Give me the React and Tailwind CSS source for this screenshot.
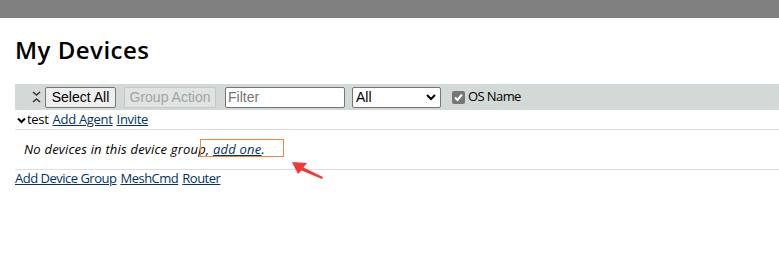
import React from "react";

const tre = { fontFamily: '"Open Sans", "DejaVu Sans", sans-serif' };

export default function App() {
  return (
    <div className="relative w-[779px] h-[269px] bg-white overflow-hidden text-black" style={tre}>
      <div className="h-[18px] bg-[#808080]" />
      <div className="pl-[15px]">
        <h1 className="h-[66px] pt-[16px] text-[24px] leading-[32px] font-semibold tracking-[0.5px]">My Devices</h1>
        <div className="h-[26px] bg-[#d3d9d6] flex items-center pl-[17px]">
          <svg width="9" height="14" viewBox="0 0 9 14" className="mr-[4px]">
            <path d="M1 2 L4.5 5 L8 2" stroke="#333" strokeWidth="1.6" fill="none" />
            <path d="M1 12 L4.5 9 L8 12" stroke="#333" strokeWidth="1.6" fill="none" />
          </svg>
          <button className="h-[21px] w-[71px] border border-[#767676] rounded-[2px] bg-[#efefef] text-[14px] leading-[19px] text-black" style={{ fontFamily: '"Liberation Sans", Arial, sans-serif' }}>Select All</button>
          <button disabled className="ml-[8px] h-[21px] w-[92px] border border-[#c4c8c6] rounded-[2px] bg-[#dfe3e1] text-[14px] leading-[19px] text-[#a0a4a2]" style={{ fontFamily: '"Liberation Sans", Arial, sans-serif' }}>Group Action</button>
          <input placeholder="Filter" className="ml-[9px] h-[21px] w-[120px] border border-[#767676] rounded-[2px] bg-white px-[2px] text-[14px] placeholder:text-[#757575] outline-none" style={{ fontFamily: '"Liberation Sans", Arial, sans-serif' }} />
          <div className="ml-[7px] h-[21px] w-[89px] border border-[#767676] rounded-[2px] bg-white flex items-center justify-between pl-[3px] pr-[4px] text-[14px]" style={{ fontFamily: '"Liberation Sans", Arial, sans-serif' }}>
            <span>All</span>
            <svg width="10" height="7" viewBox="0 0 10 7"><path d="M1 1 L5 5 L9 1" stroke="#000" strokeWidth="2" fill="none" /></svg>
          </div>
          <div className="ml-[11px] w-[13px] h-[13px] rounded-[2px] bg-[#767676] flex items-center justify-center">
            <svg width="11" height="11" viewBox="0 0 11 11"><path d="M2 5.5 L4.5 8 L9 2.5" stroke="#fff" strokeWidth="2" fill="none" /></svg>
          </div>
          <span className="ml-[3px] text-[13px] tracking-[-0.6px]">OS Name</span>
        </div>
        <div className="h-[20px] flex items-center pt-[1px] text-[13px] tracking-[-0.3px] border-b border-[#dddddd]">
          <svg width="9" height="7" viewBox="0 0 9 7" className="ml-[2px] mr-[1px]"><path d="M1 1.5 L4.5 5 L8 1.5" stroke="#000" strokeWidth="2" fill="none" /></svg>
          <span>test</span>
          <a className="ml-[4px] underline text-[#003366]">Add Agent</a>
          <a className="ml-[4px] underline text-[#003366]">Invite</a>
        </div>
        <div className="h-[40px] flex items-center pl-[9px] text-[13px] italic tracking-[0.2px] border-b border-[#dddddd]">
          <span>No devices in this device group, <a className="underline text-[#003366]">add one</a>.</span>
        </div>
        <div className="h-[18px] flex items-center text-[13px] tracking-[-0.5px]">
          <a className="underline text-[#003366]">Add Device Group</a>
          <a className="ml-[4px] underline text-[#003366]">MeshCmd</a>
          <a className="ml-[4px] underline text-[#003366]">Router</a>
        </div>
      </div>
      <div className="absolute left-[200px] top-[139px] w-[84px] h-[18px] border border-[#f0883a]" />
      <svg className="absolute left-[288px] top-[158px]" width="40" height="24" viewBox="0 0 40 24">
        <path d="M4 4 L19 5 L15.5 9.5 L35 19 L34 21 L13.5 12.5 L10 16 Z" fill="#f03a3a" />
      </svg>
    </div>
  );
}
